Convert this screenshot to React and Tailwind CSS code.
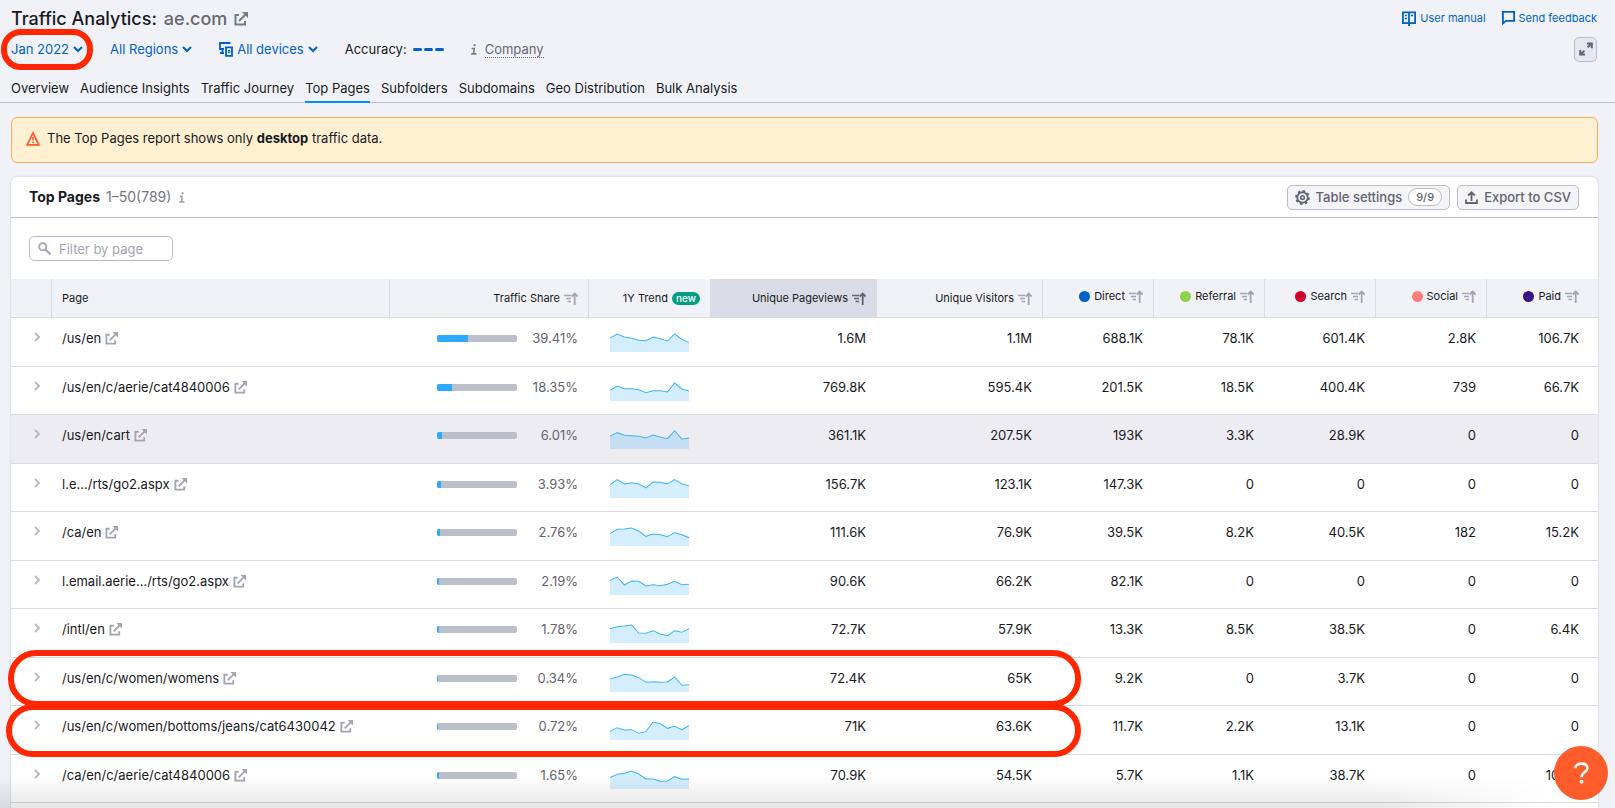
const rows = [
  { page: "/us/en", share: "39.41%", bar: 31, trend: [42, 54, 45, 41, 35, 34, 45, 40, 33, 54, 38, 28], values: ["1.6M", "1.1M", "688.1K", "78.1K", "601.4K", "2.8K", "106.7K"] },
  { page: "/us/en/c/aerie/cat4840006", share: "18.35%", bar: 15, trend: [32, 45, 37, 37, 34, 25, 31, 31, 27, 54, 36, 30], values: ["769.8K", "595.4K", "201.5K", "18.5K", "400.4K", "739", "66.7K"] },
  { page: "/us/en/cart", share: "6.01%", bar: 5, active: true, trend: [38, 49, 41, 40, 38, 33, 42, 36, 31, 55, 30, 33], values: ["361.1K", "207.5K", "193K", "3.3K", "28.9K", "0", "0"] },
  { page: "l.e.../rts/go2.aspx", share: "3.93%", bar: 4, trend: [40, 55, 42, 46, 42, 30, 48, 47, 42, 55, 43, 36], values: ["156.7K", "123.1K", "147.3K", "0", "0", "0", "0"] },
  { page: "/ca/en", share: "2.76%", bar: 3, trend: [37, 50, 51, 54, 45, 29, 36, 34, 28, 40, 34, 25], values: ["111.6K", "76.9K", "39.5K", "8.2K", "40.5K", "182", "15.2K"] },
  { page: "l.email.aerie.../rts/go2.aspx", share: "2.19%", bar: 2, trend: [44, 54, 30, 42, 41, 27, 31, 28, 32, 41, 31, 32], values: ["90.6K", "66.2K", "82.1K", "0", "0", "0", "0"] },
  { page: "/intl/en", share: "1.78%", bar: 2, trend: [43, 49, 51, 54, 30, 29, 37, 27, 22, 37, 32, 43], values: ["72.7K", "57.9K", "13.3K", "8.5K", "38.5K", "0", "6.4K"] },
  { page: "/us/en/c/women/womens", share: "0.34%", bar: 1, trend: [39, 45, 53, 51, 43, 29, 31, 29, 30, 45, 20, 22], values: ["72.4K", "65K", "9.2K", "0", "3.7K", "0", "0"] },
  { page: "/us/en/c/women/bottoms/jeans/cat6430042", share: "0.72%", bar: 1, trend: [26, 37, 30, 31, 20, 25, 54, 49, 35, 41, 31, 43], values: ["71K", "63.6K", "11.7K", "2.2K", "13.1K", "0", "0"] },
  { page: "/ca/en/c/aerie/cat4840006", share: "1.65%", bar: 2, trend: [34, 44, 47, 54, 45, 30, 30, 23, 24, 37, 29, 30], values: ["70.9K", "54.5K", "5.7K", "1.1K", "38.7K", "0", "10.3K"] },
];

const tabs = ["Overview", "Audience Insights", "Traffic Journey", "Top Pages", "Subfolders", "Subdomains", "Geo Distribution", "Bulk Analysis"];

const channels = [
  { name: "Direct", dot: "bg-[#0062c8]" },
  { name: "Referral", dot: "bg-[#8fd14f]" },
  { name: "Search", dot: "bg-[#d1002f]" },
  { name: "Social", dot: "bg-[#ff7f7a]" },
  { name: "Paid", dot: "bg-[#3a1480]" },
];

function ExternalIcon({ className }) {
  return (
    <svg viewBox="0 0 14 14" className={className} fill="none" stroke="currentColor" strokeWidth="2" aria-hidden="true">
      <path d="M5 3H1.5v9.5H11V9" />
      <path d="M5 9l6.5-6.5" />
      <path d="M8 0h6v6l-2-2-2-2z" fill="currentColor" stroke="none" />
    </svg>
  );
}

function Chevron() {
  return (
    <svg viewBox="0 0 10 7" className="h-[7px] w-2.5" fill="none" stroke="currentColor" strokeWidth="2" aria-hidden="true">
      <path d="M1 1l4 4 4-4" />
    </svg>
  );
}

function InfoIcon({ className }) {
  return (
    <svg viewBox="0 0 6 11" className={className} fill="none" stroke="currentColor" strokeWidth="1.6" aria-hidden="true">
      <path d="M0.6 4.5H3.2L2.6 9.8M0.2 9.9H5.4" />
      <circle cx="3.6" cy="1.2" r="1.1" fill="currentColor" stroke="none" />
    </svg>
  );
}

function SortIcon({ className }) {
  return (
    <svg viewBox="0 0 14 13" className={"h-[13px] w-3.5 shrink-0 " + className} fill="none" stroke="currentColor" aria-hidden="true">
      <path d="M0 3.5h7M2 6.5h5M3.5 9.5H7" strokeWidth="1.4" />
      <path d="M10.7 13V1.5M7.7 4.5l3-3 3 3" strokeWidth="1.8" />
    </svg>
  );
}

function Trend({ data }) {
  const points = data.map((v, i) => `${((i * 236) / 11).toFixed(1)},${60 - v}`).join(" ");
  return (
    <svg viewBox="0 0 236 60" className="h-5 w-[79px]" preserveAspectRatio="none" aria-hidden="true">
      <polygon points={`0,60 ${points} 236,60`} fill="#2baaff" fillOpacity="0.2" />
      <polyline points={points} fill="none" stroke="#3eb5fa" strokeWidth="3" />
    </svg>
  );
}

function Header({ label, children, className = "", sort = "text-[#a3a5b2]" }) {
  return (
    <th scope="col" className={"h-[39px] border-b border-r border-[#d9dbe4] p-0 font-normal " + className}>
      <button className="flex w-full items-center justify-end gap-1 whitespace-nowrap">
        {children}
        {label}
        <SortIcon className={sort} />
      </button>
    </th>
  );
}

export default function App() {
  return (
    <div className="relative flex min-h-screen flex-col bg-[#f1f2f8] font-['Inter',sans-serif] text-[13px] leading-5 text-[#171a22]">
      <header className="border-b border-[#bbbdc8] px-[11px]">
        <div className="flex h-9 items-center justify-between pr-[7px]">
          <h1 className="flex items-center pt-0.5 text-lg font-medium">
            Traffic Analytics:
            <span className="ml-[7px] text-[#666874]">ae.com</span>
            <a href="#site" aria-label="Open ae.com" className="ml-[7px] text-[#777985]"><ExternalIcon className="size-3.5" /></a>
          </h1>
          <div className="flex items-center gap-4 text-[11px] text-[#0062c8]">
            <a href="#manual" className="flex items-center gap-1">
              <svg viewBox="0 0 14 15" className="h-[15px] w-3.5" fill="none" stroke="currentColor" strokeWidth="1.8" aria-hidden="true">
                <path d="M.9 1.4h12.2v10.7H.9zM7 1v14" />
                <path d="M3 4.5h2M3 7.5h2M9 4.5h2" strokeWidth="1.4" />
              </svg>
              User manual
            </a>
            <a href="#feedback" className="flex items-center gap-1">
              <svg viewBox="0 0 13 14" className="h-3.5 w-[13px]" fill="none" stroke="currentColor" strokeWidth="1.8" aria-hidden="true">
                <path d="M.9.9h11.2v9H4L.9 12.4z" />
              </svg>
              Send feedback
            </a>
          </div>
        </div>
        <div className="flex h-[26px] items-center justify-between pr-[7px]">
          <div className="flex items-center">
            <div className="flex gap-[27px] text-[#0062c8]">
              <button className="flex items-center gap-1">Jan 2022 <Chevron /></button>
              <button className="flex items-center gap-1">All Regions <Chevron /></button>
              <button className="flex items-center gap-1">
                <svg viewBox="0 0 14 15" className="h-[15px] w-3.5" fill="none" stroke="currentColor" strokeWidth="1.8" aria-hidden="true">
                  <path d="M11.5 1H1v6h4M1 11h4M3.5 7v4" />
                  <path d="M7 5.4h6v8.5H7z" />
                  <path d="M9.3 8.5h1.6v2.2H9.3z" strokeWidth="1" />
                </svg>
                All devices <Chevron />
              </button>
            </div>
            <span className="ml-[27px]">Accuracy:</span>
            <span className="ml-1.5 flex gap-0.5">
              <i className="h-[3px] w-[9px] rounded-xs bg-[#0062c8]" />
              <i className="h-[3px] w-[9px] rounded-xs bg-[#0062c8]" />
              <i className="h-[3px] w-[9px] rounded-xs bg-[#0062c8]" />
            </span>
            <InfoIcon className="ml-[27px] h-[11px] w-1.5 text-[#777985]" />
            <a href="#company" className="ml-2 border-b border-dotted border-[#666874] leading-4 text-[#666874]">Company</a>
          </div>
          <button aria-label="Full screen" className="flex h-[25px] w-[23px] items-center justify-center rounded-[5px] border border-[#bbbdc8] bg-[#e5e6ef] text-[#62646f]">
            <svg viewBox="0 0 14 14" className="size-3.5" fill="none" stroke="currentColor" strokeWidth="2" aria-hidden="true">
              <path d="M8 1.5h4.8v4.7M12.5 1.5L8.6 5.4M1.2 8v4.5H6M1.5 12.5l3.9-3.9" />
            </svg>
          </button>
        </div>
        <nav className="mt-4 flex gap-[11px]">
          {tabs.map((t) => (
            <a key={t} href="#tab" className={"-mb-px h-[25px] border-b-2 " + (t === "Top Pages" ? "border-[#008ff8]" : "border-transparent")}>{t}</a>
          ))}
        </nav>
      </header>

      <main className="flex flex-1 flex-col pl-[11px] pr-[17px] pt-3.5">
        <div role="alert" className="flex h-[46px] items-center gap-[7px] rounded-md border border-[#ffab5e] bg-[#fff0d1] px-3.5 pb-1">
          <svg viewBox="0 0 14 15" className="h-[15px] w-3.5" fill="none" stroke="#ff5c2b" aria-hidden="true">
            <path d="M7 1.8L1.2 13.8h11.6z" strokeWidth="1.7" />
            <path d="M7 6v3.5M7 10.5v1.8" strokeWidth="1.6" />
          </svg>
          <p>The Top Pages report shows only <strong>desktop</strong> traffic data.</p>
        </div>

        <section className="mt-3.5 flex-1 rounded-t-md bg-white shadow-[0_0_2px_#b9bbc8]">
          <div className="flex h-[41px] items-center justify-between border-b border-[#bbbdc8] pl-[18px] pr-[19px]">
            <h2 className="flex items-center text-sm">
              <strong>Top Pages</strong>
              <span className="ml-1.5 text-[#777985]">1–50(789)</span>
              <InfoIcon className="ml-2 h-[11px] w-1.5 text-[#a3a5b2]" />
            </h2>
            <div className="flex gap-[7px] font-medium text-[#62646f]">
              <button className="flex h-[25px] items-center gap-1.5 rounded-[5px] border border-[#bbbdc8] bg-[#f3f3f8] px-[7px]">
                <svg viewBox="0 0 16 16" className="size-[15px]" fill="none" stroke="currentColor" aria-hidden="true">
                  <circle cx="8" cy="8" r="5.6" strokeWidth="1.9" />
                  <circle cx="8" cy="8" r="2" strokeWidth="1.6" />
                  <circle cx="8" cy="8" r="7" strokeWidth="1.8" strokeDasharray="2.75 2.75" />
                </svg>
                Table settings
                <span className="flex h-[18px] items-center rounded-full border border-[#bbbdc8] bg-white px-[7px] text-[11px]">9/9</span>
              </button>
              <button className="flex h-[25px] items-center gap-1.5 rounded-[5px] border border-[#bbbdc8] bg-[#f3f3f8] px-[7px]">
                <svg viewBox="0 0 13 13" className="size-[13px]" fill="none" stroke="currentColor" strokeWidth="1.8" aria-hidden="true">
                  <path d="M1 8.5V12h11V8.5M6.5 10V1.5M3.2 4.5l3.3-3.2 3.3 3.2" />
                </svg>
                Export to CSV
              </button>
            </div>
          </div>

          <div className="p-[18px]">
            <label className="flex h-[25px] w-36 items-center rounded-[5px] border border-[#b9bccb] bg-white px-2">
              <svg viewBox="0 0 13 13" className="size-[13px] shrink-0 text-[#a3a5b2]" fill="none" stroke="currentColor" aria-hidden="true">
                <circle cx="4.8" cy="4.8" r="3.6" strokeWidth="1.8" />
                <path d="M7.5 7.5l5 5" strokeWidth="2" />
              </svg>
              <input type="text" aria-label="Filter by page" placeholder="Filter by page" className="ml-2 w-full min-w-0 bg-transparent outline-none placeholder:text-[#a3a5b2]" />
            </label>
          </div>

          <table className="w-full table-fixed border-separate border-spacing-0">
            <colgroup>
              <col className="w-[41px]" />
              <col />
              <col className="w-[199px]" />
              <col className="w-[121px]" />
              <col className="w-[167px]" />
              <col className="w-[166px]" />
              <col className="w-[111px]" />
              <col className="w-[111px]" />
              <col className="w-[111px]" />
              <col className="w-[111px]" />
              <col className="w-[111px]" />
            </colgroup>
            <thead className="bg-[#f1f2f8] text-[11px] leading-4">
              <tr>
                <th className="border-b border-r border-[#d9dbe4]" />
                <th scope="col" className="border-b border-r border-[#d9dbe4] p-0 pl-2.5 text-left font-normal">Page</th>
                <Header label="Traffic Share" className="pr-2.5" />
                <th scope="col" className="border-b border-[#d9dbe4] p-0 pr-2.5 font-normal">
                  <span className="flex items-center justify-end gap-1">
                    1Y Trend
                    <span className="rounded-full bg-[#009f81] px-1 text-[10px] font-medium leading-[13px] text-white">new</span>
                  </span>
                </th>
                <Header label="Unique Pageviews" className="bg-[#d9dce6] pr-2.5" sort="text-[#62646f]" />
                <Header label="Unique Visitors" className="pr-2.5" />
                {channels.map((c, i) => (
                  <Header key={c.name} label={c.name} className={i === 4 ? "border-r-0 pb-1 pr-[19px]" : "pb-1 pr-2.5"}>
                    <i className={"size-[11px] rounded-full " + c.dot} />
                  </Header>
                ))}
              </tr>
            </thead>
            <tbody>
              {rows.map((r) => (
                <tr key={r.page} className={"align-top odd:h-[49px] even:h-12 " + (r.active ? "bg-[#edecf2]" : "")}>
                  <td className="border-b border-[#d9dbe4] p-0 pl-[23px] pt-3.5">
                    <button aria-label="Expand row" className="block text-[#b5b7c4]">
                      <svg viewBox="0 0 7 10" className="h-2.5 w-[7px]" fill="none" stroke="currentColor" strokeWidth="1.8" aria-hidden="true">
                        <path d="M1 1l4 4-4 4" />
                      </svg>
                    </button>
                  </td>
                  <td className="border-b border-[#d9dbe4] p-0 pl-2.5 pt-2.5">
                    <a href="#page" className="flex items-center gap-1 whitespace-nowrap">
                      {r.page}
                      <ExternalIcon className="size-[13px] text-[#a3a5b2]" />
                    </a>
                  </td>
                  <td className="border-b border-[#d9dbe4] p-0 pr-[11px] pt-2.5">
                    <div className="flex items-center justify-end text-[#62646f]">
                      <span className="h-[7px] w-20 overflow-hidden rounded-xs bg-[#babfc9]">
                        <span className="block h-full bg-[#2baaff]" style={{ width: r.bar }} />
                      </span>
                      <span className="w-[61px] text-right">{r.share}</span>
                    </div>
                  </td>
                  <td className="border-b border-[#d9dbe4] p-0 pl-[21px] pt-3.5">
                    <Trend data={r.trend} />
                  </td>
                  {r.values.map((v, i) => (
                    <td key={i} className={"border-b border-[#d9dbe4] p-0 pt-2.5 text-right " + (i === 6 ? "pr-[19px]" : "pr-[11px]")}>{v}</td>
                  ))}
                </tr>
              ))}
            </tbody>
          </table>
        </section>
      </main>

      <div className="pointer-events-none fixed inset-x-0 bottom-0 h-8 bg-linear-to-t from-black/10 to-transparent [mask-image:linear-gradient(to_right,black_85%,transparent_96%)]" />
      <div className="pointer-events-none absolute left-px top-[29px] h-[41px] w-[92px] rounded-[20px] border-[6px] border-[#ff2600]" />
      <div className="pointer-events-none absolute left-2 top-[650px] h-[57px] w-[1073px] rounded-[28px] border-[6px] border-[#ff2600]" />
      <div className="pointer-events-none absolute left-1.5 top-[704px] h-[53px] w-[1075px] rounded-[28px] border-[6px] border-[#ff2600]" />
      <button aria-label="Help" className="fixed bottom-2 right-[7px] flex size-[54px] items-center justify-center rounded-full bg-[#ff5c2b] text-white">
        <svg viewBox="0 0 16 23" className="h-[22px] w-[15px]" fill="none" stroke="currentColor" strokeWidth="2.7" aria-hidden="true">
          <path d="M1.5 6.5C1.5 3.2 4.2 1.5 8 1.5c3.8 0 6.3 1.8 6.3 4.8C14.3 10.5 8 10.3 8 16" />
          <circle cx="8" cy="20.8" r="2" fill="currentColor" stroke="none" />
        </svg>
      </button>
    </div>
  );
}
